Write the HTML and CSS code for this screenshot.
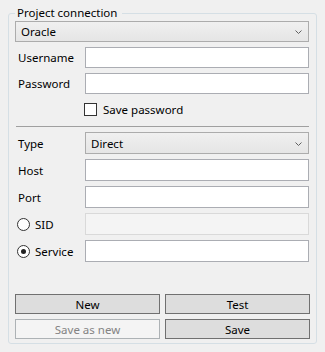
FILE: index.html
```html
<!DOCTYPE html>
<html lang="en">
<head>
    <meta charset="UTF-8">
    <title>Project connection</title>
    <link rel="stylesheet" href="styles.css">
</head>
<body>
    <fieldset class="group">
        <legend>Project connection</legend>

        <div class="combo wide">
            <span>Oracle</span>
            <svg class="arrow" width="7" height="4" viewBox="0 0 7 4"><path d="M0.5 0.5 L3.5 3.5 L6.5 0.5" fill="none" stroke="#606060" stroke-width="1"/></svg>
        </div>

        <div class="form">
            <label class="label">Username</label>
            <input class="textbox" type="text">
            <label class="label">Password</label>
            <input class="textbox" type="text">
        </div>

        <div class="check-row">
            <span class="checkbox"></span>
            <span>Save password</span>
        </div>

        <div class="separator"></div>

        <div class="form loose">
            <label class="label">Type</label>
            <div class="combo">
                <span>Direct</span>
                <svg class="arrow" width="7" height="4" viewBox="0 0 7 4"><path d="M0.5 0.5 L3.5 3.5 L6.5 0.5" fill="none" stroke="#606060" stroke-width="1"/></svg>
            </div>
            <label class="label">Host</label>
            <input class="textbox" type="text">
            <label class="label">Port</label>
            <input class="textbox" type="text">
            <label class="label radio-label"><span class="radio"></span>SID</label>
            <input class="textbox" type="text" disabled>
            <label class="label radio-label"><span class="radio checked"></span>Service</label>
            <input class="textbox" type="text">
        </div>

        <div class="buttons">
            <button class="btn">New</button>
            <button class="btn">Test</button>
            <button class="btn" disabled>Save as new</button>
            <button class="btn">Save</button>
        </div>
    </fieldset>
</body>
</html>
```

FILE: styles.css
```css
body {
    margin: 0;
    padding: 5px 0 0 8px;
    background: #f0f0f0;
    font-family: "Noto Sans", "Segoe UI", sans-serif;
    font-size: 11.5px;
    color: #000;
}
.group {
    width: 295px;
    height: 333px;
    margin: 0;
    padding: 0 6px 4px 6px;
    border: 1px solid #d5dfe5;
    border-radius: 3px;
    display: flex;
    flex-direction: column;
    box-sizing: content-box;
}
.group legend {
    padding: 0 5px 0 2px;
    margin-left: 0;
    line-height: 16px;
    height: 16px;
}
.combo {
    height: 21px;
    box-sizing: border-box;
    border: 1px solid #acacac;
    background: linear-gradient(#f0f0f0, #e5e5e5);
    display: flex;
    align-items: center;
    justify-content: space-between;
    padding: 0 6px 0 5px;
    margin-right: 1px;
}
.combo .arrow {
    margin-top: 1px;
}
.form {
    display: grid;
    grid-template-columns: 70px 1fr;
    row-gap: 5px;
    margin-top: 5px;
}
.form.loose {
    margin-top: 5px;
}
.form.loose .textbox,
.form.loose .combo {
    height: 22px;
}
.label {
    display: flex;
    align-items: center;
    padding-left: 3px;
}
.textbox {
    height: 21px;
    box-sizing: border-box;
    border: 1px solid #abadb3;
    background: #fff;
    margin: 0 1px 0 0;
    padding: 0 3px;
    font: inherit;
    outline: none;
}
.textbox:disabled {
    background: #f4f4f4;
    border-color: #d9d9d9;
}
.check-row {
    display: flex;
    align-items: center;
    gap: 6px;
    margin: 7px 0 0 69px;
    height: 17px;
}
.checkbox {
    width: 13px;
    height: 13px;
    box-sizing: border-box;
    border: 1px solid #333;
    background: #fff;
}
.separator {
    height: 1px;
    background: #a0a0a0;
    margin: 8px 1px 0 1px;
}
.radio-label {
    gap: 5px;
    padding-left: 2px;
}
.radio {
    width: 13px;
    height: 13px;
    box-sizing: border-box;
    border: 1px solid #333;
    border-radius: 50%;
    background: #fff;
    display: flex;
    align-items: center;
    justify-content: center;
}
.radio.checked::after {
    content: "";
    width: 5px;
    height: 5px;
    border-radius: 50%;
    background: #222;
}
.buttons {
    display: grid;
    grid-template-columns: 1fr 1fr;
    gap: 5px;
    margin-top: auto;
}
.btn {
    height: 20px;
    box-sizing: border-box;
    border: 1px solid #707070;
    background: #dddddd;
    font: inherit;
    color: #000;
    padding: 0;
}
.btn:disabled {
    background: #f4f4f4;
    border-color: #adb2b5;
    color: #838383;
}
```
